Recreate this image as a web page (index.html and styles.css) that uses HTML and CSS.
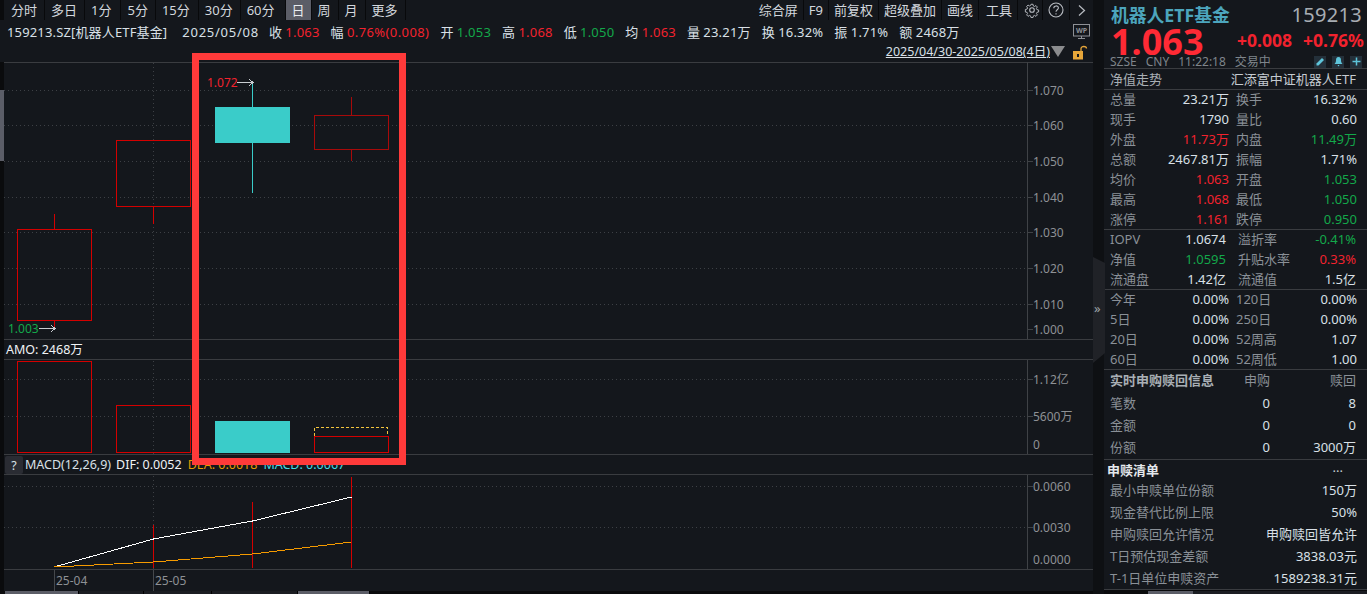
FILE: index.html
```html
<!DOCTYPE html>
<html lang="zh-CN">
<head>
  <meta charset="UTF-8" />
  <title>机器人ETF基金 159213</title>
  <link rel="stylesheet" href="styles.css">
</head>
<body>
<div class="app">

  <div class="main">
    <!-- period tabs -->
    <div class="toolbar">
      <div class="tabs tabs-left">
        <span class="tab">分时</span><span class="tab">多日</span><span class="tab">1分</span><span class="tab">5分</span><span class="tab">15分</span><span class="tab">30分</span><span class="tab">60分</span><span class="tab active">日</span><span class="tab">周</span><span class="tab">月</span><span class="tab">更多</span>
      </div>
      <div class="tabs tabs-right">
        <span class="tab">综合屏</span><span class="tab">F9</span><span class="tab">前复权</span><span class="tab">超级叠加</span><span class="tab">画线</span><span class="tab tab-tools">工具</span>
        <span class="tab tab-icon tab-gear">
          <svg width="16" height="16" viewBox="0 0 16 16" fill="none" stroke="#b8bcc2" stroke-width="1.1"><path d="M6.8 1.5h2.4l.4 2 1.3.6 1.8-1.1 1.6 1.7-1.1 1.7.6 1.4 2 .4v2.4l-2 .4-.6 1.3 1.1 1.7-1.6 1.7-1.8-1.1-1.3.6-.4 1.9H6.8l-.4-1.9-1.3-.6-1.8 1.1-1.6-1.7 1.1-1.7-.6-1.3-2-.4V7.6l2-.4.6-1.4L1.7 4.1l1.6-1.7 1.8 1.1 1.3-.6z" transform="translate(1.2 1) scale(.85)"/><circle cx="8" cy="8" r="2.3"/></svg>
        </span>
        <span class="tab tab-icon tab-help">
          <svg width="16" height="16" viewBox="0 0 16 16" fill="none" stroke="#b8bcc2" stroke-width="1.1"><circle cx="8" cy="8" r="7"/><path d="M5.8 6.2c0-3 4.6-3 4.6-.2 0 1.700-2.400 1.800-2.400 3.700M8 11.200v1.300"/></svg>
        </span>
        <span class="tab tab-icon tab-next">
          <svg width="9" height="13" viewBox="0 0 9 13" fill="none" stroke="#b8bcc2" stroke-width="1.2"><path d="M2 1.500 7.500 6.500 2 11.500"/></svg>
        </span>
      </div>
    </div>

    <!-- quote line -->
    <div class="quote">
      <span class="q-name">159213.SZ[机器人ETF基金]</span>
      <span class="q-date">2025/05/08</span>
      <span class="q-item">收 <b class="up">1.063</b></span>
      <span class="q-item">幅 <b class="up q-wide">0.76%(0.008)</b></span>
      <span class="q-item">开 <b class="down">1.053</b></span>
      <span class="q-item">高 <b class="up">1.068</b></span>
      <span class="q-item">低 <b class="down">1.050</b></span>
      <span class="q-item">均 <b class="up">1.063</b></span>
      <span class="q-item">量 <b>23.21万</b></span>
      <span class="q-item">换 <b>16.32%</b></span>
      <span class="q-item">振 <b>1.71%</b></span>
      <span class="q-item">额 <b>2468万</b></span>
      <svg class="wp-icon" width="17" height="16" viewBox="0 0 17 16" fill="none" stroke="#8d9095"><rect x=".5" y=".5" width="16" height="11.500"/><path d="M5 14.500h7M8.500 12v2.500"/><text x="8.500" y="9" class="wp-text">WP</text></svg>
    </div>

    <div class="range">
      <span class="range-date">2025/04/30-2025/05/08(4日)</span>
      <i class="range-arrow"></i>
      <svg class="lock-icon" width="16" height="15" viewBox="0 0 16 15"><path d="M9 7V3.500C9 .8 14.500.8 14.500 3.500" fill="none" stroke="#e7a63a" stroke-width="1.300"/><rect x="1" y="6" width="10" height="8.500" fill="#e7a63a"/><rect x="5" y="9" width="2" height="3" fill="#14171c"/></svg>
    </div>

    <!-- price pane -->
    <svg class="pane pane-price" viewBox="0 62 1093 277" shape-rendering="crispEdges">
      <rect class="strip" x="0" y="62" width="4" height="277"/>
      <rect class="strip-thumb" x="0" y="90" width="4" height="71"/>
      <path class="rule" d="M4 62.500H1093"/>
      <g class="grid">
        <path d="M4 90.500H1027M4 125.500H1027M4 161.500H1027M4 197.500H1027M4 232.500H1027M4 268.500H1027M4 304.500H1027M153.500 63V339"/>
      </g>
      <path class="axis" d="M1027.500 62V339M1027 90.500h6M1027 125.500h6M1027 161.500h6M1027 197.500h6M1027 232.500h6M1027 268.500h6M1027 304.500h6M1027 329.500h6"/>
      <g class="ax-label">
        <text x="1033" y="95">1.070</text><text x="1033" y="130">1.060</text><text x="1033" y="166">1.050</text><text x="1033" y="202">1.040</text><text x="1033" y="237">1.030</text><text x="1033" y="273">1.020</text><text x="1033" y="309">1.010</text><text x="1033" y="334">1.000</text>
      </g>
      <g class="candle-up">
        <path d="M54.500 214V229M54.500 320V329M153.500 206V224"/>
        <rect x="17.500" y="229.500" width="74" height="91"/>
        <rect x="116.500" y="140.500" width="74" height="66"/>
      </g>
      <g class="candle-up thin">
        <path d="M351.500 97V115M351.500 149V161"/>
        <rect x="314.500" y="115.500" width="74" height="34"/>
      </g>
      <path class="wick-down" d="M252.500 82V193"/>
      <rect class="fill-down" x="215" y="107" width="75" height="36"/>
      <text class="mark mark-up" x="207" y="87">1.072</text>
      <path class="arrow" d="M237 82.500H253M249 79l4 3.500-4 3.500"/>
      <text class="mark mark-down" x="8" y="333">1.003</text>
      <path class="arrow" d="M39 328.500H55M51 325l4 3.500-4 3.500"/>
    </svg>

    <div class="pane-head">
      <span class="amo">AMO: 2468万</span>
    </div>

    <!-- volume pane -->
    <svg class="pane pane-vol" viewBox="0 360 1093 94" shape-rendering="crispEdges">
      <rect class="strip" x="0" y="360" width="4" height="94"/>
      <g class="grid">
        <path d="M4 379.500H1027M4 416.500H1027M153.500 361V454"/>
      </g>
      <path class="axis" d="M1027.500 360V454M1027 379.500h6M1027 416.500h6"/>
      <g class="ax-label">
        <text x="1033" y="384">1.12亿</text><text x="1033" y="421">5600万</text><text x="1033" y="449">0</text>
      </g>
      <g class="candle-up">
        <rect x="17.500" y="361.500" width="74" height="91"/>
        <rect x="116.500" y="405.500" width="74" height="47"/>
        <rect x="314.500" y="436.500" width="74" height="16"/>
      </g>
      <rect class="fill-down" x="215" y="421" width="75" height="32"/>
      <path class="forecast" d="M314.500 436V427.500H387.500V436"/>
    </svg>

    <div class="pane-head macd-head">
      <span class="help-btn">?</span>
      <span class="m-name">MACD(12,26,9)</span>
      <span class="m-dif">DIF: 0.0052</span>
      <span class="m-dea">DEA: 0.0018</span>
      <span class="m-macd">MACD: 0.0067</span>
    </div>

    <!-- macd pane -->
    <svg class="pane pane-macd" viewBox="0 475 1093 94">
      <rect class="strip" x="0" y="475" width="4" height="94"/>
      <g class="grid" shape-rendering="crispEdges">
        <path d="M4 486.500H1027M4 527.500H1027M153.500 476V569"/>
      </g>
      <path class="axis" shape-rendering="crispEdges" d="M1027.500 475V569M1027 486.500h6M1027 527.500h6"/>
      <g class="ax-label">
        <text x="1033" y="491">0.0060</text><text x="1033" y="532">0.0030</text><text x="1033" y="564">0.0000</text>
      </g>
      <path class="macd-bar" shape-rendering="crispEdges" d="M153.500 525V568M252.500 502V568M351.500 477V568"/>
      <polyline class="line-dif" shape-rendering="crispEdges" points="54,567 153.500,539 252.500,521 351.500,497"/>
      <polyline class="line-dea" shape-rendering="crispEdges" points="54,567 153.500,562 252.500,554 351.500,542"/>
    </svg>

    <div class="date-axis">
      <span class="date-tick date-a">25-04</span>
      <span class="date-tick date-b">25-05</span>
    </div>
    <div class="bottom-tabs">
      <i class="bt on bt-a"></i><i class="bt bt-b"></i><i class="bt bt-c"></i><i class="bt bt-d"></i><i class="bt on bt-e"></i>
    </div>
  </div>

  <!-- collapse handle -->
  <div class="handle">
    <svg class="handle-shape" width="12" height="112" viewBox="0 0 12 112"><polygon points="0,0 12,6 12,96 0,106" fill="#202227"/></svg>
    <span class="handle-mark">»</span>
  </div>

  <!-- right panel -->
  <div class="side">
    <div class="head">
      <div class="head-top">
        <span class="fund-name">机器人ETF基金</span>
        <span class="fund-code">159213</span>
      </div>
      <div class="head-price">
        <span class="price">1.063</span>
        <span class="chg">+0.008</span>
        <span class="chg">+0.76%</span>
      </div>
      <div class="head-status">
        <span>SZSE</span><span>CNY</span><span>11:22:18</span><span>交易中</span>
        <span class="mini-icons">
          <i class="mini"><svg width="11" height="11" viewBox="0 0 11 11"><path d="M1.500 9.500V7.500L7 2l2 2-5.500 5.500z" fill="#5ec4da"/></svg></i>
          <i class="mini"><svg width="11" height="11" viewBox="0 0 11 11"><path d="M5.500 1C3.500 1 3 2.500 3 4.500S2 7.500 1.500 8h8C9 7.500 8 6.500 8 4.500S7.500 1 5.500 1zM4.500 9h2l-1 1.500z" fill="#5ec4da"/></svg></i>
          <i class="mini"><svg width="11" height="11" viewBox="0 0 11 11"><path d="M5.500 1.500v8M1.500 5.500h8" stroke="#5ec4da" stroke-width="1.500"/></svg></i>
        </span>
      </div>
    </div>

    <div class="title-row">
      <span>净值走势</span>
      <span class="fund-full">汇添富中证机器人ETF</span>
    </div>

    <div class="sec">
      <div class="row"><span>总量</span><b>23.21万</b><span>换手</span><b>16.32%</b></div>
      <div class="row"><span>现手</span><b>1790</b><span>量比</span><b>0.60</b></div>
      <div class="row"><span>外盘</span><b class="up">11.73万</b><span>内盘</span><b class="down">11.49万</b></div>
      <div class="row"><span>总额</span><b>2467.81万</b><span>振幅</span><b>1.71%</b></div>
      <div class="row"><span>均价</span><b class="up">1.063</b><span>开盘</span><b class="down">1.053</b></div>
      <div class="row"><span>最高</span><b class="up">1.068</b><span>最低</span><b class="down">1.050</b></div>
      <div class="row"><span>涨停</span><b class="up">1.161</b><span>跌停</span><b class="down">0.950</b></div>
    </div>

    <div class="sec">
      <div class="row row-wide"><span>IOPV</span><b>1.0674</b><span>溢折率</span><b class="down">-0.41%</b></div>
      <div class="row row-wide"><span>净值</span><b class="down">1.0595</b><span>升贴水率</span><b class="up">0.33%</b></div>
      <div class="row row-wide"><span>流通盘</span><b>1.42亿</b><span>流通值</span><b>1.5亿</b></div>
    </div>

    <div class="sec">
      <div class="row"><span>今年</span><b>0.00%</b><span>120日</span><b>0.00%</b></div>
      <div class="row"><span>5日</span><b>0.00%</b><span>250日</span><b>0.00%</b></div>
      <div class="row"><span>20日</span><b>0.00%</b><span>52周高</span><b>1.07</b></div>
      <div class="row"><span>60日</span><b>0.00%</b><span>52周低</span><b>1.00</b></div>
    </div>

    <div class="sec sec-redeem">
      <div class="row3 row3-head"><strong>实时申购赎回信息</strong><span>申购</span><span>赎回</span></div>
      <div class="row3"><span>笔数</span><b>0</b><b>8</b></div>
      <div class="row3"><span>金额</span><b>0</b><b>0</b></div>
      <div class="row3"><span>份额</span><b>0</b><b>3000万</b></div>
    </div>

    <div class="sec sec-list">
      <div class="list-head"><strong>申赎清单</strong><span class="more">...</span></div>
      <div class="row2"><span>最小申赎单位份额</span><b>150万</b></div>
      <div class="row2"><span>现金替代比例上限</span><b>50%</b></div>
      <div class="row2"><span>申购赎回允许情况</span><b>申购赎回皆允许</b></div>
      <div class="row2"><span>T日预估现金差额</span><b>3838.03元</b></div>
      <div class="row2"><span>T-1日单位申赎资产</span><b>1589238.31元</b></div>
    </div>

    <div class="side-tabs"><i class="st st-a"></i><i class="st st-b"></i></div>
  </div>

  <!-- highlight frame -->
  <div class="frame"></div>
</div>
</body>
</html>
```

FILE: styles.css
```css
* { box-sizing: border-box; }
html, body { margin: 0; height: 100%; background: #0a0b0d; overflow: hidden; }
body { color: #d9e0e7; font-family: "Noto Sans", "Noto Sans CJK SC", sans-serif; font-size: 13px; }
b { font-weight: 400; }
i { font-style: normal; }
.up { color: #f2222e; }
.down { color: #13a84a; }

.app { position: relative; display: flex; width: 1367px; height: 594px; overflow: hidden; }
.main { width: 1093px; flex: none; display: flex; flex-direction: column; background: #0a0b0d; }

/* toolbar */
.toolbar { height: 20px; display: flex; justify-content: space-between; background: #14171c; margin-left: 4px; padding-left: 1px; }
.tabs { display: flex; }
.tab { height: 20px; line-height: 20px; padding: 0 7px 0 6px; border-right: 1px solid #08090b; color: #d3d8de; white-space: nowrap; }
.tab.active { background: #5b5d67; color: #e8ebee; }
.tabs-left .tab:nth-child(3) { padding-right: 9px; }
.tabs-left .tab:nth-child(5) { padding-right: 8px; }
.tabs-left .tab:nth-child(7) { padding-right: 10px; }
.tabs-left .tab:nth-child(8) { padding-right: 6px; }
.tabs-right .tab { padding: 0 5px; }
.tabs-right .tab-tools { padding-left: 7px; }
.tabs-right .tab-icon { width: 27px; padding: 0; display: flex; align-items: center; justify-content: center; }
.tabs-right .tab-gear { width: 25px; padding-left: 3px; }
.tabs-right .tab-next { width: 23px; border-right: 0; }

/* quote line */
.quote { position: relative; height: 24px; padding-left: 7px; display: flex; align-items: center; gap: 11px; line-height: 20px; white-space: nowrap; background: #14171c; }
.q-name { margin-right: 4px; letter-spacing: .15px; }
.q-date { letter-spacing: .75px; margin-right: -1px; }
.q-item b { letter-spacing: .2px; }
.q-item b.q-wide { letter-spacing: .4px; }
.wp-icon { position: absolute; left: 1073px; top: 4px; }
.wp-text { font-size: 7px; font-weight: 700; fill: #8d9095; stroke: none; text-anchor: middle; }

.range { position: relative; height: 18px; display: flex; justify-content: flex-end; align-items: center; padding: 0 43px 2px 0; background: #14171c; }
.range-date { font-size: 12.500px; line-height: 16px; text-decoration: underline; color: #d9e0e7; }
.range-arrow { position: absolute; left: 1051px; top: 2px; border-left: 7px solid transparent; border-right: 7px solid transparent; border-top: 11px solid #8b8c8e; }
.lock-icon { position: absolute; left: 1072px; top: 1px; }

/* chart panes */
.pane { display: block; width: 1093px; flex: none; background: #14171c; }
.pane-price { height: 277px; }
.pane-vol { height: 94px; }
.pane-macd { height: 94px; }
.strip { fill: #0a0b0d; }
.strip-thumb { fill: #5b5d67; }
.rule { fill: none; stroke: #3a3c40; }
.grid path { fill: none; stroke: #3d4045; stroke-dasharray: 1 3; }
.axis { fill: none; stroke: #3f4246; }
.ax-label text { fill: #8e9195; font-size: 12px; }
.candle-up path, .candle-up rect { fill: none; stroke: #d40000; }
.candle-up.thin path, .candle-up.thin rect { stroke: #a80a0a; }
.wick-down { stroke: #3accc9; }
.fill-down { fill: #3accc9; }
.forecast { fill: none; stroke: #f2c53d; stroke-dasharray: 3 2; }
.mark { font-size: 12px; }
.mark-up { fill: #f2222e; }
.mark-down { fill: #13a84a; }
.arrow { fill: none; stroke: #c9cdd1; }
.macd-bar { stroke: #d40000; fill: none; }
.line-dif { fill: none; stroke: #fff; stroke-width: 1; }
.line-dea { fill: none; stroke: #f59a00; stroke-width: 1; }

.pane-head { height: 21px; flex: none; margin-left: 4px; display: flex; align-items: center; border-top: 1px solid #3a3c40; border-bottom: 1px solid #3a3c40; line-height: 19px; white-space: nowrap; background: #14171c; }
.amo { margin-left: 2px; font-size: 12.500px; color: #f0f3f6; }
.macd-head { font-size: 12.500px; }
.help-btn { width: 18px; height: 18px; margin-left: 1px; margin-right: 2px; border-radius: 2px; background: #2a2c33; text-align: center; color: #d9e0e7; }
.m-name { margin-right: 5px; }
.m-dif { margin-right: 6px; color: #f0f3f6; }
.m-dea { margin-right: 6px; color: #e89a00; }
.m-macd { color: #45dbe6; }

.date-axis { position: relative; height: 22px; flex: none; margin-left: 4px; border-top: 1px solid #3a3c40; background: #14171c; }
.date-tick { position: absolute; top: 0; height: 21px; padding-left: 1px; border-left: 1px solid #45484c; color: #8e9195; font-size: 12px; line-height: 21px; }
.date-a { left: 50px; }
.date-b { left: 149px; }

.bottom-tabs { height: 3px; flex: none; display: flex; background: #0a0b0d; padding-left: 5px; }
.bt { height: 3px; border-right: 1px solid #000; background: #1b1d22; }
.bt.on { background: #5b5d67; }
.bt-a { width: 74px; }
.bt-b { width: 65px; }
.bt-c { width: 68px; }
.bt-d { width: 86px; }
.bt-e { width: 72px; }

/* handle */
.handle { position: relative; width: 11px; flex: none; background: #0e1013; }
.handle-shape { position: absolute; left: 0; top: 257px; }
.handle-mark { position: absolute; left: 1px; top: 298px; color: #9ea2a7; font-size: 13px; line-height: 20px; }

/* right panel */
.side { width: 263px; flex: none; background: #14171c; }
.head { height: 69px; border-bottom: 1px solid #3a3c40; padding: 0 5px 0 6px; }
.head-top { height: 28px; display: flex; justify-content: space-between; align-items: center; }
.fund-name { margin-left: 1px; font-size: 17.800px; font-weight: 700; color: #4ca5bd; }
.fund-code { font-size: 20px; color: #a8adb3; letter-spacing: .3px; }
.head-price { height: 27px; display: flex; align-items: center; }
.price { flex: none; width: 126px; margin-left: 1px; font-size: 36px; font-weight: 700; line-height: 27px; color: #ff2a35; }
.chg { flex: none; font-size: 17.500px; font-weight: 700; color: #f2222e; margin-right: 11px; line-height: 27px; position: relative; top: -1px; }
.chg:last-child { margin-right: 0; }
.head-status { height: 13px; display: flex; gap: 9px; align-items: center; color: #7f858b; font-size: 12px; line-height: 13px; }
.mini-icons { margin-left: auto; display: flex; gap: 6px; }
.mini { width: 12px; height: 12px; background: #24303a; display: flex; align-items: center; justify-content: center; }

.title-row { height: 21px; padding: 0 11px 0 6px; border-bottom: 1px solid #3a3c40; display: flex; justify-content: space-between; align-items: center; color: #a9afb5; line-height: 20px; }
.fund-full { color: #c5cbd1; }

.sec { border-bottom: 1px solid #3a3c40; }
.row { height: 20px; display: grid; grid-template-columns: 30px 89px 40px 88px; padding-left: 6px; line-height: 18px; white-space: nowrap; }
.row:last-child { height: 19px; }
.row > span { color: #8a9097; }
.row > b { text-align: right; }
.row > span:nth-child(3) { margin-left: 7px; }
.row-wide { grid-template-columns: 40px 76px 52px 78px; line-height: 19px; }
.row-wide > span:nth-child(3) { margin-left: 12px; }

.row3 { height: 22px; display: grid; grid-template-columns: 120px 40px 86px; padding-left: 6px; line-height: 20px; white-space: nowrap; }
.row3 > span { color: #8a9097; }
.row3 > b, .row3-head > span:not(:first-child) { text-align: right; }
.row3-head { height: 23px; line-height: 21px; }
.row3-head strong { color: #a9afb5; font-weight: 700; }

.list-head { height: 20px; padding: 0 24px 0 3px; display: flex; justify-content: space-between; line-height: 20px; }
.list-head strong { color: #e4e8ec; font-weight: 700; }
.more { color: #c5cbd1; line-height: 14px; }
.row2 { height: 22px; padding: 0 10px 0 6px; display: flex; justify-content: space-between; line-height: 20px; white-space: nowrap; }
.row2:last-child { height: 21px; }
.row2 > span { color: #8a9097; }

.side-tabs { height: 4px; display: flex; padding-left: 44px; background: #0a0b0d; }
.st { height: 3px; margin-top: 1px; }
.st-a { width: 45px; background: #5b5d67; }
.st-b { flex: 1; background: #1b1d22; }

/* red highlight frame */
.frame { position: absolute; left: 192px; top: 53px; width: 214px; height: 412px; border: 7px solid #ff3a3a; }
```
